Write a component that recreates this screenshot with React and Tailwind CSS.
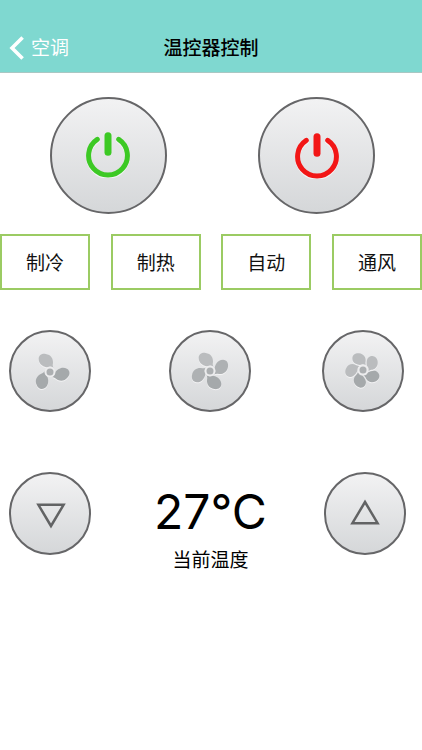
import clsx from 'clsx';

const modes = [
  { id: 'cool', label: '制冷' },
  { id: 'heat', label: '制热' },
  { id: 'auto', label: '自动' },
  { id: 'vent', label: '通风' }
];

const BLADE = 'M-8 -14 C-16 -14 -34 -22 -34 -39 C-34 -51 -23 -56 -13 -54 C3 -52 10 -39 9 -27 C8 -22 8 -18 10 -13 A17 17 0 0 0 -8 -14Z';
const BLADE_NARROW = 'M-9 -15 C-17 -17 -32 -20 -32 -34 C-32 -46 -22 -51 -12 -50 C2 -48 9 -38 8 -27 C7 -23 7 -20 8 -15 A18 18 0 0 0 -9 -15Z';

function RoundButton({ label, className, children }) {
  return (
    <button
      type="button"
      aria-label={label}
      className={clsx(
        'flex shrink-0 items-center justify-center rounded-full border-2 border-solid border-[#666668] bg-linear-to-b from-[#f2f2f3] to-[#d5d7d9]',
        className
      )}
    >
      {children}
    </button>
  );
}

function PowerIcon({ className }) {
  return (
    <svg viewBox="0 0 46 46" className={clsx('h-[46px] w-[46px]', className)} fill="none" strokeLinecap="round">
      <g stroke="#ffffff" strokeOpacity="0.6" transform="translate(0 1)">
        <path d="M12.3 7.6 A19.4 19.4 0 1 0 33.7 7.6" strokeWidth="5.2" />
      </g>
      <g stroke="currentColor">
        <path d="M12.3 7.4 A19.4 19.4 0 1 0 33.7 7.4" strokeWidth="5" />
        <path d="M23 3.7 V20.2" strokeWidth="7" />
      </g>
    </svg>
  );
}

// blades get darker towards the bottom of the button
function bladeColor(angle) {
  if (angle > 110 && angle < 260) return '#a5a9ab';
  if (angle > 80 && angle < 280) return '#aeb1b3';
  return '#babcbe';
}

function FanIcon({ blades, className }) {
  const path = blades === 5 ? BLADE_NARROW : BLADE;
  const angles = Array.from({ length: blades }, (_, i) => (i * 360) / blades);

  return (
    <svg viewBox="-60 -60 120 120" className={clsx('h-10 w-10', className)}>
      <g fill="#f3f3f4" transform="translate(0 3)">
        {angles.map(angle => <path key={angle} d={path} transform={`rotate(${angle})`} />)}
      </g>
      {angles.map(angle => (
        <path key={angle} d={path} fill={bladeColor(angle)} transform={`rotate(${angle})`} />
      ))}
      <circle r="16" fill="#ececed" />
      <circle r="10.5" fill="#acafb1" />
    </svg>
  );
}

function TriangleIcon({ className }) {
  return (
    <svg viewBox="0 0 32 28" className={clsx('h-7 w-8', className)} fill="none">
      <path d="M16 4 L28.6 25.2 H3.4 Z" stroke="#626364" strokeWidth="2.5" />
    </svg>
  );
}

export default function App() {
  return (
    <div className="h-[750px] w-[422px] overflow-hidden bg-white font-['Inter','Noto_Sans_CJK_SC',sans-serif] text-black">
      {/* Navigation Bar */}
      <header className="grid h-[73px] grid-cols-3 items-center border-b border-[#a9c7c3] bg-[#7fd8d0] pt-[23px]">
        <button type="button" className="flex items-center pl-[9px] text-white">
          <svg viewBox="0 0 15 24" className="h-6 w-[15px]" fill="none" stroke="currentColor" strokeWidth="3.6">
            <path d="M13.6 1.4 L3 12 L13.6 22.6" />
          </svg>
          <span className="ml-[7px] pt-[2px] text-[19px] leading-6">空调</span>
        </button>
        <h1 className="pt-[2px] text-center text-[19px] leading-6 font-medium whitespace-nowrap">温控器控制</h1>
      </header>

      {/* Power */}
      <section className="mt-[23.5px] flex justify-between pr-[47px] pl-[49.5px]">
        <RoundButton label="开" className="h-[117px] w-[117px]">
          <PowerIcon className="text-[#3cc924]" />
        </RoundButton>
        <RoundButton label="关" className="h-[117px] w-[117px]">
          <PowerIcon className="mt-[2px] ml-px text-[#f21616]" />
        </RoundButton>
      </section>

      {/* Modes */}
      <section className="mt-[20.5px] flex justify-between">
        {modes.map(mode => (
          <button
            key={mode.id}
            type="button"
            className="h-14 w-[90px] border-2 border-[#9bcb63] pt-[3px] text-[19px] leading-6 text-[#111111]"
          >
            {mode.label}
          </button>
        ))}
      </section>

      {/* Fan Speed */}
      <section className="mt-[40px] flex pl-[9px]">
        <RoundButton label="低速" className="h-[82px] w-[82px]">
          <FanIcon blades={3} className="mt-px" />
        </RoundButton>
        <RoundButton label="中速" className="ml-[77.5px] h-[82px] w-[82px]">
          <FanIcon blades={4} />
        </RoundButton>
        <RoundButton label="高速" className="ml-[71.5px] h-[82px] w-[82px]">
          <FanIcon blades={5} className="-mt-[2px]" />
        </RoundButton>
      </section>

      {/* Temperature */}
      <section className="mt-[60px] flex justify-between pr-4 pl-[9px]">
        <RoundButton label="降温" className="h-[83px] w-[82px]">
          <TriangleIcon className="mt-[4px] ml-[2px] rotate-180" />
        </RoundButton>
        <div className="ml-[6px] flex flex-col items-center pt-[12px]">
          <p className="text-[48px] leading-[56px] whitespace-nowrap">27°C</p>
          <p className="mt-[9px] text-[19px] leading-6">当前温度</p>
        </div>
        <RoundButton label="升温" className="h-[83px] w-[82px]">
          <TriangleIcon className="-mt-[4px]" />
        </RoundButton>
      </section>
    </div>
  );
}
